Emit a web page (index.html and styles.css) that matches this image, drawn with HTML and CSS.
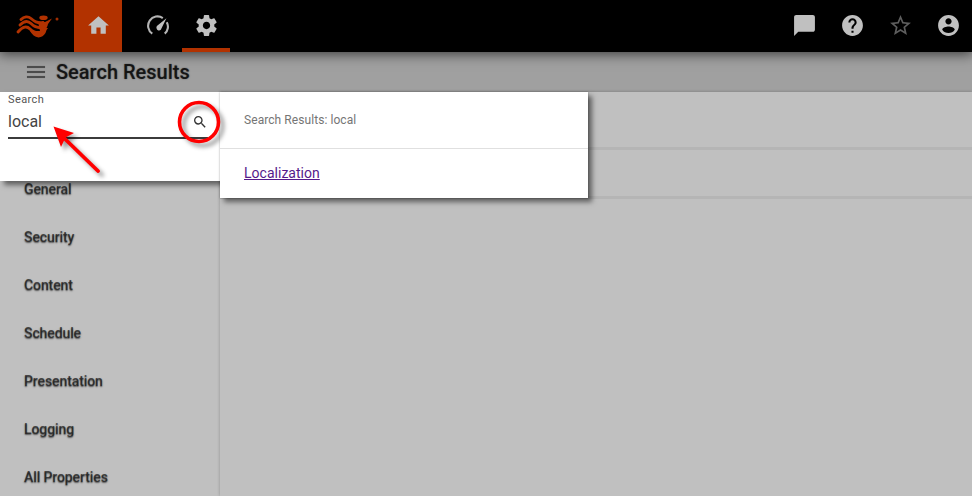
FILE: index.html
```html
<!DOCTYPE html>
<html lang="en">
<head>
<meta charset="utf-8">
<title>Search Results</title>
<link rel="stylesheet" href="styles.css">
</head>
<body>
<header class="topbar">
  <a class="tab brand">
    <svg class="logo" viewBox="0 0 44 24" width="44" height="24">
      <g fill="none" stroke="#b23200" stroke-width="2.900" stroke-linecap="round">
        <path d="M6 5.500C9 2.500 13 2 16 4.500S22 9.500 28 8.500"/>
        <path d="M5 11C9 7 13 6.500 16 9.500S22 14.500 28 13.500"/>
        <path d="M3 18C8 12 12 12 15 15S21 20 27 18.500"/>
      </g>
      <path fill="#b23200" d="M23 8H30L37 4.500L33 10Q32.500 12.500 31.500 14H33Q31 16 30.500 19Q28 23 23.500 23.500Q18 22.500 15 17L25 17Z"/>
      <ellipse cx="28.500" cy="3.800" rx="4.200" ry="2.300" fill="#b23200"/>
      <circle cx="42" cy="5" r="1.500" fill="#a02d00"/>
    </svg>
  </a>
  <a class="tab home"><svg class="icon" viewBox="0 0 24 24"><path d="M10 20v-6h4v6h5v-8h3L12 3 2 12h3v8z"/></svg></a>
  <a class="tab gauge"><svg class="icon" viewBox="0 0 24 24"><path class="dial" d="M5.500 20.500A9.600 9.600 0 0 1 16.500 4.200M20.600 8.500A9.600 9.600 0 0 1 18.500 20.500"/><path d="M10 15.200a2.600 2.600 0 0 0 4.400 1.200L20.300 4.500 10.600 12.300a2.600 2.600 0 0 0-.6 2.900z"/></svg></a>
  <a class="tab active"><svg class="icon" viewBox="0 0 24 24"><path d="M19.430 12.980c.04-.32.07-.64.07-.98s-.03-.66-.07-.98l2.110-1.650c.19-.15.24-.42.12-.64l-2-3.460c-.12-.22-.39-.3-.61-.22l-2.490 1c-.52-.4-1.080-.73-1.690-.98l-.38-2.650C14.460 2.180 14.250 2 14 2h-4c-.25 0-.46.18-.49.42l-.38 2.650c-.61.25-1.170.59-1.690.98l-2.490-1c-.23-.09-.49 0-.61.22l-2 3.460c-.13.22-.07.49.12.64l2.110 1.650c-.04.32-.07.65-.07.98s.03.66.07.98l-2.110 1.650c-.19.15-.24.42-.12.64l2 3.460c.12.22.39.3.61.22l2.490-1c.52.4 1.080.73 1.690.98l.38 2.650c.03.24.24.42.49.42h4c.25 0 .46-.18.49-.42l.38-2.650c.61-.25 1.170-.59 1.690-.98l2.490 1c.23.09.49 0 .61-.22l2-3.460c.12-.22.07-.49-.12-.64l-2.110-1.650zM12 15.500c-1.930 0-3.500-1.570-3.500-3.500s1.570-3.500 3.500-3.500 3.500 1.570 3.500 3.500-1.570 3.500-3.500 3.500z"/></svg></a>
  <span class="spacer"></span>
  <a class="tab"><svg class="icon" viewBox="0 0 24 24"><path d="M20 2H4c-1.100 0-2 .9-2 2v18l4-4h14c1.100 0 2-.9 2-2V4c0-1.100-.9-2-2-2z"/></svg></a>
  <a class="tab"><svg class="icon" viewBox="0 0 24 24"><path d="M12 2C6.480 2 2 6.480 2 12s4.480 10 10 10 10-4.480 10-10S17.520 2 12 2zm1 17h-2v-2h2v2zm2.070-7.750l-.9.920C13.450 12.900 13 13.500 13 15h-2v-.5c0-1.100.45-2.100 1.170-2.830l1.240-1.260c.37-.36.59-.86.59-1.410 0-1.100-.9-2-2-2s-2 .9-2 2H8c0-2.210 1.790-4 4-4s4 1.790 4 4c0 .88-.36 1.680-.93 2.250z"/></svg></a>
  <a class="tab star"><svg class="icon" viewBox="0 0 24 24"><path d="M22 9.240l-7.190-.62L12 2 9.190 8.630 2 9.240l5.460 4.730L5.820 21 12 17.270 18.180 21l-1.630-7.030L22 9.240zM12 15.400l-3.760 2.270 1-4.280-3.320-2.880 4.380-.38L12 6.100l1.710 4.040 4.380.38-3.320 2.880 1 4.280L12 15.400z"/></svg></a>
  <a class="tab"><svg class="icon" viewBox="0 0 24 24"><path d="M12 2C6.480 2 2 6.480 2 12s4.480 10 10 10 10-4.480 10-10S17.520 2 12 2zm0 3c1.660 0 3 1.340 3 3s-1.340 3-3 3-3-1.340-3-3 1.340-3 3-3zm0 14.200c-2.500 0-4.710-1.280-6-3.220.03-1.990 4-3.080 6-3.080 1.990 0 5.970 1.090 6 3.080-1.290 1.940-3.500 3.220-6 3.220z"/></svg></a>
</header>
<div class="titlebar">
  <span class="burger"><i></i><i></i><i></i></span>
  <h1>Search Results</h1>
</div>
<div class="body">
  <aside class="sidebar">
    <section class="search">
      <label class="search-label">Search</label>
      <div class="search-field">
        <span>local</span>
        <svg class="glass" viewBox="0 0 24 24" width="16" height="16"><path d="M15.500 14h-.79l-.28-.27A6.470 6.470 0 0 0 16 9.500 6.500 6.500 0 1 0 9.500 16c1.610 0 3.090-.59 4.230-1.570l.27.280v.79l5 4.990L20.490 19l-4.990-5zm-6 0C7.010 14 5 11.990 5 9.500S7.010 5 9.500 5 14 7.010 14 9.500 11.990 14 9.500 14z"/></svg>
      </div>
    </section>
    <nav class="nav">
      <a>General</a><a>Security</a><a>Content</a><a>Schedule</a><a>Presentation</a><a>Logging</a><a>All Properties</a>
    </nav>
  </aside>
  <main class="main">
    <div class="row first"></div>
    <div class="row second"></div>
    <section class="results">
      <div class="results-head">Search Results: local</div>
      <div class="results-item"><a href="#">Localization</a></div>
    </section>
  </main>
  <svg class="callouts" viewBox="0 0 240 100" width="240" height="100">
    <circle cx="199" cy="30" r="19.500" fill="none" stroke="#f00" stroke-width="3.600"/>
    <path d="M64 46L98 79" stroke="#f00" stroke-width="3.800" stroke-linecap="round"/>
    <path d="M53.500 34.500L74 41L65.500 45.500L61 55Z" fill="#f00"/>
  </svg>
</div>
</body>
</html>
```

FILE: styles.css
```css
* { box-sizing: border-box; }
body {
  margin: 0;
  width: 972px;
  height: 496px;
  overflow: hidden;
  display: flex;
  flex-direction: column;
  background: #c0c0c0;
  font-family: Roboto, "Liberation Sans", sans-serif;
  color: #222;
}
.topbar {
  display: flex;
  flex: none;
  height: 52px;
  background: #000;
  box-shadow: 0 1px 12px 1px rgba(0, 0, 0, .65);
  position: relative;
  z-index: 2;
}
.tab {
  width: 48px;
  display: flex;
  align-items: center;
  justify-content: center;
}
.brand { width: 74px; padding-right: 1px; }
.home { background: #b23200; }
.gauge { margin-left: 12px; }
.active { border-bottom: 4px solid #b23200; padding-top: 3px; }
.icon { width: 25px; height: 25px; margin-top: -1px; fill: #c0c0c0; }
.gauge .icon { width: 23px; height: 23px; }
.dial { fill: none; stroke: #b4b4b4; stroke-width: 2.2; }
.star .icon { fill: #5e5e5e; }
.spacer { flex: 1; }
.titlebar {
  flex: none;
  height: 40px;
  display: flex;
  align-items: center;
  padding-left: 27px;
  gap: 11px;
  background: #a0a0a0;
}
.burger { display: grid; gap: 3px; }
.burger i { width: 18px; height: 2px; background: #4c4c4c; box-shadow: 0 0 1px rgba(0, 0, 0, .3); }
.titlebar h1 {
  margin: 0;
  font-size: 20px;
  font-weight: 500;
  line-height: 40px;
  color: rgba(0, 0, 0, .76);
  text-shadow: 0 0 1.5px rgba(0, 0, 0, .55);
}
.body { flex: 1; display: flex; position: relative; min-height: 0; }
.sidebar { width: 220px; flex: none; }
.search {
  height: 89px;
  padding: 0 12px 0 8px;
  background: #fff;
  position: relative;
  z-index: 1;
  box-shadow: 4px 4px 5px rgba(0, 0, 0, .5);
}
.search-label { display: block; font-size: 11px; line-height: 15px; margin-bottom: -1px; color: #555; letter-spacing: .4px; }
.search-field {
  height: 33px;
  display: flex;
  align-items: center;
  justify-content: space-between;
  border-bottom: 2px solid #3b3b3b;
  font-size: 16px;
  color: #444;
}
.glass { fill: #333; }
.nav { margin-top: -16px; }
.nav a {
  display: block;
  height: 48px;
  padding-left: 24px;
  font-size: 14px;
  font-weight: 500;
  line-height: 49px;
  letter-spacing: -.1px;
  color: rgba(0, 0, 0, .62);
  text-shadow: 0 .5px 1.5px rgba(0, 0, 0, .6);
}
.main { flex: 1; position: relative; box-shadow: 0 0 3px rgba(0, 0, 0, .25); }
.row { border-bottom: 3px solid #b5b5b5; }
.first { height: 58px; }
.second { height: 49px; }
.results {
  position: absolute;
  top: 0;
  left: 0;
  width: 368px;
  height: 106px;
  background: #fff;
  box-shadow: 4px 4px 5px rgba(0, 0, 0, .5), 0 0 2px rgba(0, 0, 0, .3);
  z-index: 1;
}
.results-head {
  height: 57px;
  padding-left: 24px;
  border-bottom: 1px solid #e0e0e0;
  font-size: 12px;
  line-height: 56px;
  letter-spacing: .07px;
  color: #757575;
}
.results-item { padding-left: 24px; font-size: 14px; line-height: 49px; letter-spacing: .02px; }
.results-item a { color: #551a8b; }
.callouts {
  position: absolute;
  top: 0;
  left: 0;
  z-index: 3;
  filter: drop-shadow(4px 4px 2px rgba(0, 0, 0, .4));
}
```
